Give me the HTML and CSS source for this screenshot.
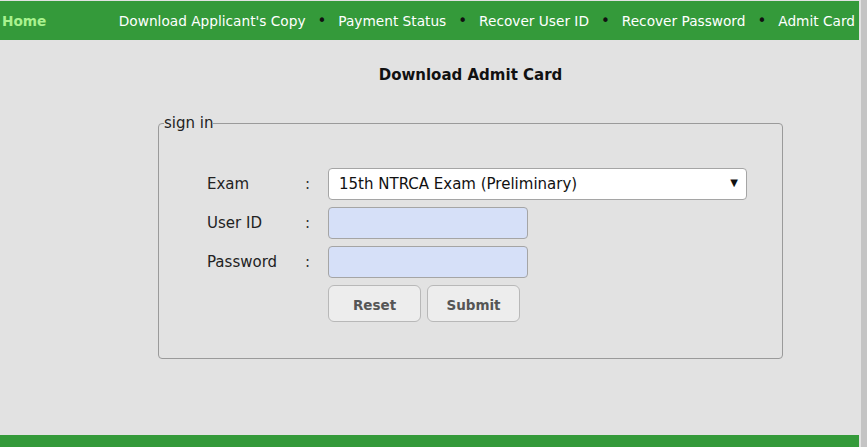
FILE: index.html
```html
<!DOCTYPE html>
<html lang="en">
<head>
    <meta charset="UTF-8">
    <meta name="viewport" content="width=device-width, initial-scale=1.0">
    <title>Download Admit Card</title>
    <link rel="stylesheet" href="styles.css">
</head>
<body>
    <div class="page">
        <nav class="topnav">
            <a class="home" href="#">Home</a>
            <ul class="menu">
                <li><a href="#">Download Applicant's Copy</a></li>
                <li class="dot">&bull;</li>
                <li><a href="#">Payment Status</a></li>
                <li class="dot">&bull;</li>
                <li><a href="#">Recover User ID</a></li>
                <li class="dot">&bull;</li>
                <li><a href="#">Recover Password</a></li>
                <li class="dot">&bull;</li>
                <li><a href="#">Admit Card</a></li>
            </ul>
        </nav>

        <div class="content">
            <div class="box">
                <h2 class="title">Download Admit Card</h2>
                <fieldset class="signin">
                    <legend>sign in</legend>
                    <div class="form-grid">
                        <label for="exam">Exam</label>
                        <span class="colon">:</span>
                        <div class="select-wrap">
                            <select id="exam">
                                <option>15th NTRCA Exam (Preliminary)</option>
                            </select>
                        </div>

                        <label for="user-id">User ID</label>
                        <span class="colon">:</span>
                        <input type="text" id="user-id" class="field">

                        <label for="password">Password</label>
                        <span class="colon">:</span>
                        <input type="password" id="password" class="field">

                        <span></span>
                        <span></span>
                        <div class="buttons">
                            <button type="reset" class="btn">Reset</button>
                            <button type="submit" class="btn">Submit</button>
                        </div>
                    </div>
                </fieldset>
            </div>
        </div>

        <footer class="footer-bar"></footer>
    </div>
    <div class="scroll-strip"></div>
</body>
</html>
```

FILE: styles.css
```css
html, body {
    height: 100%;
}
body {
    margin: 0;
    padding: 0;
    display: flex;
    background-color: #e2e2e2;
    font-family: 'DejaVu Sans', Verdana, sans-serif;
    color: #222;
    overflow: hidden;
}
.page {
    width: 859px;
    height: 100%;
    display: flex;
    flex-direction: column;
}
.scroll-strip {
    width: 6px;
    margin-left: 2px;
    background: #c4c4c4;
}
.topnav {
    background: #349a3a;
    height: 39px;
    margin-top: 1px;
    display: flex;
    align-items: center;
    justify-content: space-between;
    padding: 0 4px 0 2px;
}
.topnav a {
    text-decoration: none;
    color: #ffffff;
}
.topnav .home {
    color: #a9f28f;
    font-weight: bold;
    font-size: 13.7px;
}
.menu {
    list-style: none;
    margin: 0;
    padding: 0;
    display: flex;
    align-items: center;
    gap: 10px;
    font-size: 13.7px;
}
.menu .dot {
    color: #111;
    font-size: 15px;
    padding: 0 2px;
}
.content {
    flex: 1;
}
.box {
    width: 625px;
    margin-left: 158px;
}
.title {
    text-align: center;
    font-size: 15px;
    font-weight: bold;
    color: #111;
    margin: 26px 0 30px 0;
}
.signin {
    margin: 0;
    border: 1px solid #9a9a9a;
    border-radius: 4px;
    padding: 0;
    height: 245px;
    box-sizing: border-box;
}
.signin legend {
    font-size: 15px;
    color: #222;
    padding: 0;
    margin-left: 5px;
}
.form-grid {
    display: grid;
    grid-template-columns: 98px 24px 1fr;
    row-gap: 7px;
    align-items: center;
    font-size: 15px;
    padding: 36px 35px 0 47px;
}
.form-grid label {
    color: #222;
    padding-left: 1px;
}
.colon {
    color: #333;
    padding-left: 1px;
}
.select-wrap {
    position: relative;
}
.select-wrap::after {
    content: "\25BC";
    position: absolute;
    right: 9px;
    top: 9px;
    font-size: 10px;
    color: #111;
    pointer-events: none;
}
.select-wrap select {
    appearance: none;
    -webkit-appearance: none;
    width: 419px;
    height: 32px;
    border: 1px solid #a5a5a5;
    border-radius: 4px;
    background: #ffffff;
    padding: 0 10px;
    font-family: inherit;
    font-size: 15px;
    color: #111;
}
.field {
    width: 200px;
    height: 32px;
    box-sizing: border-box;
    border: 1px solid #a5a5a5;
    border-radius: 4px;
    background: #d6e0f8;
    margin: 0;
}
.buttons {
    display: flex;
    gap: 6px;
}
.btn {
    width: 93px;
    height: 37px;
    border: 1px solid #b8b8b8;
    border-radius: 6px;
    background: #ededed;
    color: #555;
    font-family: 'DejaVu Sans', Verdana, sans-serif;
    font-weight: bold;
    font-size: 13.5px;
    padding-top: 4px;
}
.footer-bar {
    background: #349a3a;
    height: 12px;
}
```
